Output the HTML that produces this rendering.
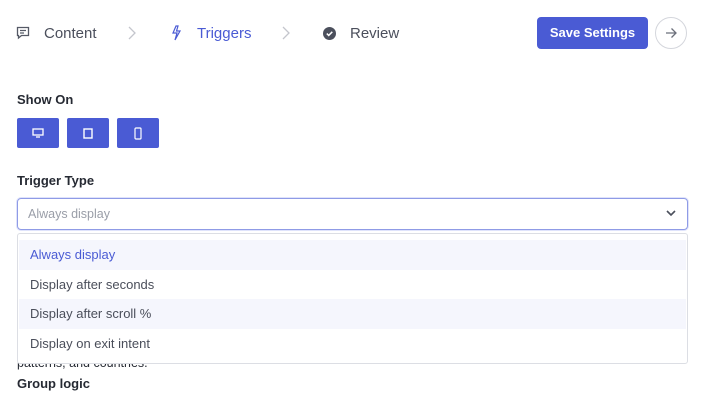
<!DOCTYPE html>
<html><head><style>
*{margin:0;padding:0;box-sizing:border-box}
body{width:706px;height:401px;overflow:hidden;background:#fff;font-family:"Liberation Sans",sans-serif;position:relative;color:#1f2430}
.a{position:absolute}
.nav{font-size:15px;color:#4b4f5c;top:25px}
.btn{position:absolute;top:118px;width:42px;height:30px;background:#4a5bd4;border-radius:2px;display:flex;align-items:center;justify-content:center}
.lbl{font-size:13px;font-weight:bold;color:#262a33;left:17px}
.opt{position:absolute;left:1px;right:1px;height:29.5px;padding-left:11px;font-size:13px;color:#4a4e5a;line-height:29.5px}
</style></head><body>
<svg class="a" style="left:16px;top:26px" width="14" height="14" viewBox="0 0 14 14" fill="none" stroke="#555a66" stroke-width="1.3"><path d="M1.5 1.5h11v8h-7l-3 2.5v-2.5h-1z"/><path d="M4 4.5h6M4 7h4"/></svg>
<div class="a nav" style="left:44px">Content</div>
<svg class="a" style="left:127px;top:26px" width="10" height="14" viewBox="0 0 10 14" fill="none" stroke="#c4c6cd" stroke-width="1.3"><path d="M2 1l6 6-6 6"/></svg>
<svg class="a" style="left:170px;top:25px" width="12" height="16" viewBox="0 0 12 16" fill="none" stroke="#4a5bd4" stroke-width="1.2"><path d="M6 1L3 8h4l-2 7 5-9H6.5L8 1z"/></svg>
<div class="a nav" style="left:197px;color:#4a5bd4">Triggers</div>
<svg class="a" style="left:281px;top:26px" width="10" height="14" viewBox="0 0 10 14" fill="none" stroke="#c4c6cd" stroke-width="1.3"><path d="M2 1l6 6-6 6"/></svg>
<svg class="a" style="left:323px;top:27px" width="13" height="13" viewBox="0 0 13 13"><circle cx="6.5" cy="6.5" r="6.5" fill="#4b4f5c"/><path d="M3.8 6.6l1.9 1.8 3.6-3.6" stroke="#fff" stroke-width="1.5" fill="none"/></svg>
<div class="a nav" style="left:350px">Review</div>
<div class="a" style="left:537px;top:17px;width:111px;height:32px;background:#4a5bd4;border-radius:4px;color:#fff;font-size:13px;font-weight:bold;text-align:center;line-height:32px">Save Settings</div>
<div class="a" style="left:655px;top:17px;width:32px;height:32px;border:1px solid #d4d6dc;border-radius:50%"></div>
<svg class="a" style="left:664px;top:26px" width="14" height="14" viewBox="0 0 14 14" fill="none" stroke="#6b6f7a" stroke-width="1.3"><path d="M2 7h10M7.5 2.5L12 7l-4.5 4.5"/></svg>
<div class="a lbl" style="top:92px">Show On</div>
<div class="btn" style="left:17px"><svg width="12" height="10" viewBox="0 0 12 10" fill="none" stroke="#fff" stroke-width="1.3"><rect x="1" y="1" width="10" height="6"/><path d="M4 9h4"/></svg></div>
<div class="btn" style="left:67px"><svg width="10" height="11" viewBox="0 0 10 11" fill="none" stroke="#fff" stroke-width="1.4"><rect x="1" y="1" width="8" height="9"/></svg></div>
<div class="btn" style="left:117px"><svg width="8" height="13" viewBox="0 0 8 13" fill="none" stroke="#fff" stroke-width="1.2"><rect x="1" y="1" width="6" height="11" rx="1"/></svg></div>
<div class="a lbl" style="top:173px">Trigger Type</div>
<div class="a" style="left:17px;top:198px;width:671px;height:32px;border:1px solid #8f9be6;border-radius:4px;box-shadow:0 0 0 1px #dfe3fb;font-size:12.5px;color:#9a9ea8;padding-left:10px;line-height:30px">Always display</div>
<svg class="a" style="left:665px;top:208px" width="12" height="10" viewBox="0 0 12 10" fill="none" stroke="#4b4f5c" stroke-width="1.6"><path d="M2 3l4 4 4-4"/></svg>
<div class="a" style="left:17px;top:356px;font-size:12.5px;color:#262a33">patterns, and countries.</div>
<div class="a" style="left:17px;top:233px;width:671px;height:131px;border:1px solid #dcdee4;border-radius:3px;background:#fff">
<div class="opt" style="top:6px;background:#f5f6fd;color:#4a5bd4">Always display</div>
<div class="opt" style="top:35.5px">Display after seconds</div>
<div class="opt" style="top:65px;background:#f5f6fd">Display after scroll %</div>
<div class="opt" style="top:94.5px">Display on exit intent</div>
</div>
<div class="a lbl" style="top:376px">Group logic</div>
</body></html>
